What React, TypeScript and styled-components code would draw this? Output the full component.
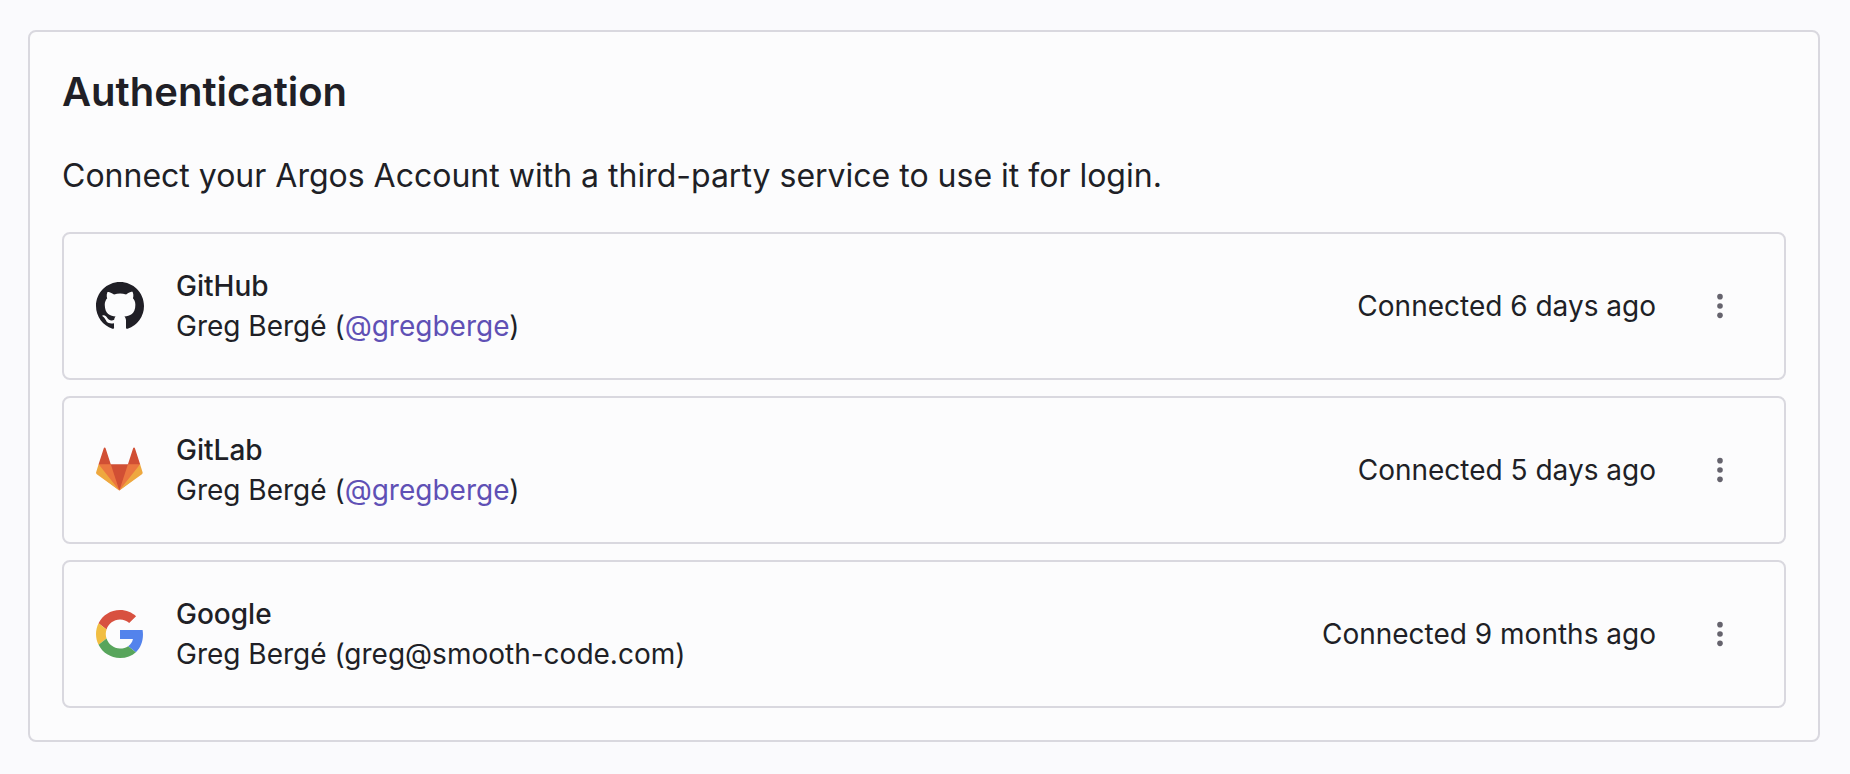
import React from "react";
import type { ReactNode } from "react";
import styled, { createGlobalStyle } from "styled-components";

const GlobalStyle = createGlobalStyle`
  * { box-sizing: border-box; }
  body {
    margin: 0;
    background: #fafafd;
    color: #201f26;
    font-family: Inter, sans-serif;
    -webkit-font-smoothing: antialiased;
  }
  h1, h2, p, ul { margin: 0; padding: 0; }
`;

const Page = styled.main`
  padding: 30px 30px 32px 28px;
`;

const Card = styled.section`
  border: 2px solid #d9d8df;
  border-radius: 8px;
  background: #fcfcfd;
  padding: 32px;
`;

const Title = styled.h1`
  font-size: 40px;
  line-height: 56px;
  font-weight: 600;
  margin-bottom: 32px;
`;

const Intro = styled.p`
  font-size: 32px;
  line-height: 48px;
  margin-bottom: 32px;
`;

const ProviderList = styled.ul`
  list-style: none;
  display: flex;
  flex-direction: column;
  gap: 16px;
`;

const Provider = styled.li`
  display: flex;
  align-items: center;
  gap: 32px;
  padding: 32px;
  border: 2px solid #d9d8df;
  border-radius: 8px;
  font-size: 28px;
  line-height: 40px;
`;

const Logo = styled.svg`
  width: 48px;
  height: 48px;
  flex: none;
`;

const Details = styled.div`
  flex: 1;
`;

const Name = styled.h2`
  font-size: 28px;
  line-height: 40px;
  font-weight: 500;
`;

const ProfileLink = styled.a`
  color: #5f50b5;
  text-decoration: none;
`;

const MenuButton = styled.button`
  display: grid;
  place-items: center;
  width: 64px;
  height: 64px;
  padding: 0;
  border: 0;
  border-radius: 8px;
  background: none;
  color: #65636d;
  cursor: pointer;
`;

const MenuIcon = styled.svg`
  width: 28px;
  height: 28px;
  fill: currentColor;
`;

const GitHubLogo = () => (
  <Logo viewBox="0 0 16 16" fill="currentColor" aria-hidden="true">
    <path d="M8 0C3.58 0 0 3.58 0 8c0 3.54 2.29 6.53 5.47 7.59.4.07.55-.17.55-.38 0-.19-.01-.82-.01-1.49-2.01.37-2.53-.49-2.69-.94-.09-.23-.48-.94-.82-1.13-.28-.15-.68-.52-.01-.53.63-.01 1.08.58 1.23.82.72 1.21 1.87.87 2.33.66.07-.52.28-.87.51-1.07-1.78-.2-3.64-.89-3.64-3.95 0-.87.31-1.59.82-2.15-.08-.2-.36-1.02.08-2.12 0 0 .67-.21 2.2.82.64-.18 1.32-.27 2-.27s1.36.09 2 .27c1.53-1.04 2.2-.82 2.2-.82.44 1.1.16 1.92.08 2.12.51.56.82 1.27.82 2.15 0 3.07-1.87 3.75-3.65 3.95.29.25.54.73.54 1.48 0 1.07-.01 1.93-.01 2.2 0 .21.15.46.55.38A8.01 8.01 0 0 0 16 8c0-4.42-3.58-8-8-8z" />
  </Logo>
);

const GitLabLogo = () => (
  <Logo viewBox="0 0 37 37" aria-hidden="true">
    <path fill="#d14f34" d="M2 14l9.38 9v-9l-4-12.28c-.205-.632-1.176-.632-1.38 0z" />
    <path fill="#d14f34" d="M34 14l-9.38 9v-9l4-12.28c.205-.632 1.176-.632 1.38 0z" />
    <path fill="#d14f34" d="M18 34.38L3 14h30z" />
    <path fill="#eb7640" d="M18 34.38L11.38 14H2l4 11z" />
    <path fill="#eb7640" d="M18 34.38L24.62 14H34l-4 11z" />
    <path fill="#eea83f" d="M2 14L.1 20.16c-.18.565 0 1.2.5 1.56L18 34.38z" />
    <path fill="#eea83f" d="M34 14l1.9 6.16c.18.565 0 1.2-.5 1.56L18 34.38z" />
  </Logo>
);

const GoogleLogo = () => (
  <Logo viewBox="0 0 48 48" aria-hidden="true">
    <path fill="#d85140" d="M24 9.5c3.54 0 6.71 1.22 9.21 3.6l6.85-6.85C35.9 2.38 30.47 0 24 0 14.62 0 6.51 5.38 2.56 13.22l7.98 6.19C12.43 13.72 17.74 9.5 24 9.5z" />
    <path fill="#5383ec" d="M46.98 24.55c0-1.57-.15-3.09-.38-4.55H24v9.02h12.94c-.58 2.96-2.26 5.48-4.78 7.18l7.73 6c4.51-4.18 7.09-10.36 7.09-17.65z" />
    <path fill="#f1be42" d="M10.53 28.59c-.48-1.45-.76-2.99-.76-4.59s.27-3.14.76-4.59l-7.98-6.19C.92 16.46 0 20.12 0 24c0 3.88.92 7.54 2.56 10.78l7.97-6.19z" />
    <path fill="#58a55c" d="M24 48c6.48 0 11.93-2.13 15.89-5.81l-7.73-6c-2.15 1.45-4.92 2.3-8.16 2.3-6.26 0-11.57-4.22-13.47-9.91l-7.98 6.19C6.51 42.62 14.62 48 24 48z" />
  </Logo>
);

interface Account {
  name: string;
  logo: ReactNode;
  identity: ReactNode;
  connected: string;
}

const accounts: Account[] = [
  {
    name: "GitHub",
    logo: <GitHubLogo />,
    identity: <ProfileLink href="https://github.com/gregberge">@gregberge</ProfileLink>,
    connected: "6 days ago",
  },
  {
    name: "GitLab",
    logo: <GitLabLogo />,
    identity: <ProfileLink href="https://gitlab.com/gregberge">@gregberge</ProfileLink>,
    connected: "5 days ago",
  },
  {
    name: "Google",
    logo: <GoogleLogo />,
    identity: "greg@smooth-code.com",
    connected: "9 months ago",
  },
];

export default function App() {
  return (
    <>
      <GlobalStyle />
      <Page>
        <Card>
          <Title>Authentication</Title>
          <Intro>Connect your Argos Account with a third-party service to use it for login.</Intro>
          <ProviderList>
            {accounts.map(({ name, logo, identity, connected }) => (
              <Provider key={name}>
                {logo}
                <Details>
                  <Name>{name}</Name>
                  <p>Greg Bergé ({identity})</p>
                </Details>
                <time>{`Connected ${connected}`}</time>
                <MenuButton type="button" aria-label={`${name} options`}>
                  <MenuIcon viewBox="0 0 24 24" aria-hidden="true">
                    <circle cx="12" cy="4" r="2.4" />
                    <circle cx="12" cy="12" r="2.4" />
                    <circle cx="12" cy="20" r="2.4" />
                  </MenuIcon>
                </MenuButton>
              </Provider>
            ))}
          </ProviderList>
        </Card>
      </Page>
    </>
  );
}
